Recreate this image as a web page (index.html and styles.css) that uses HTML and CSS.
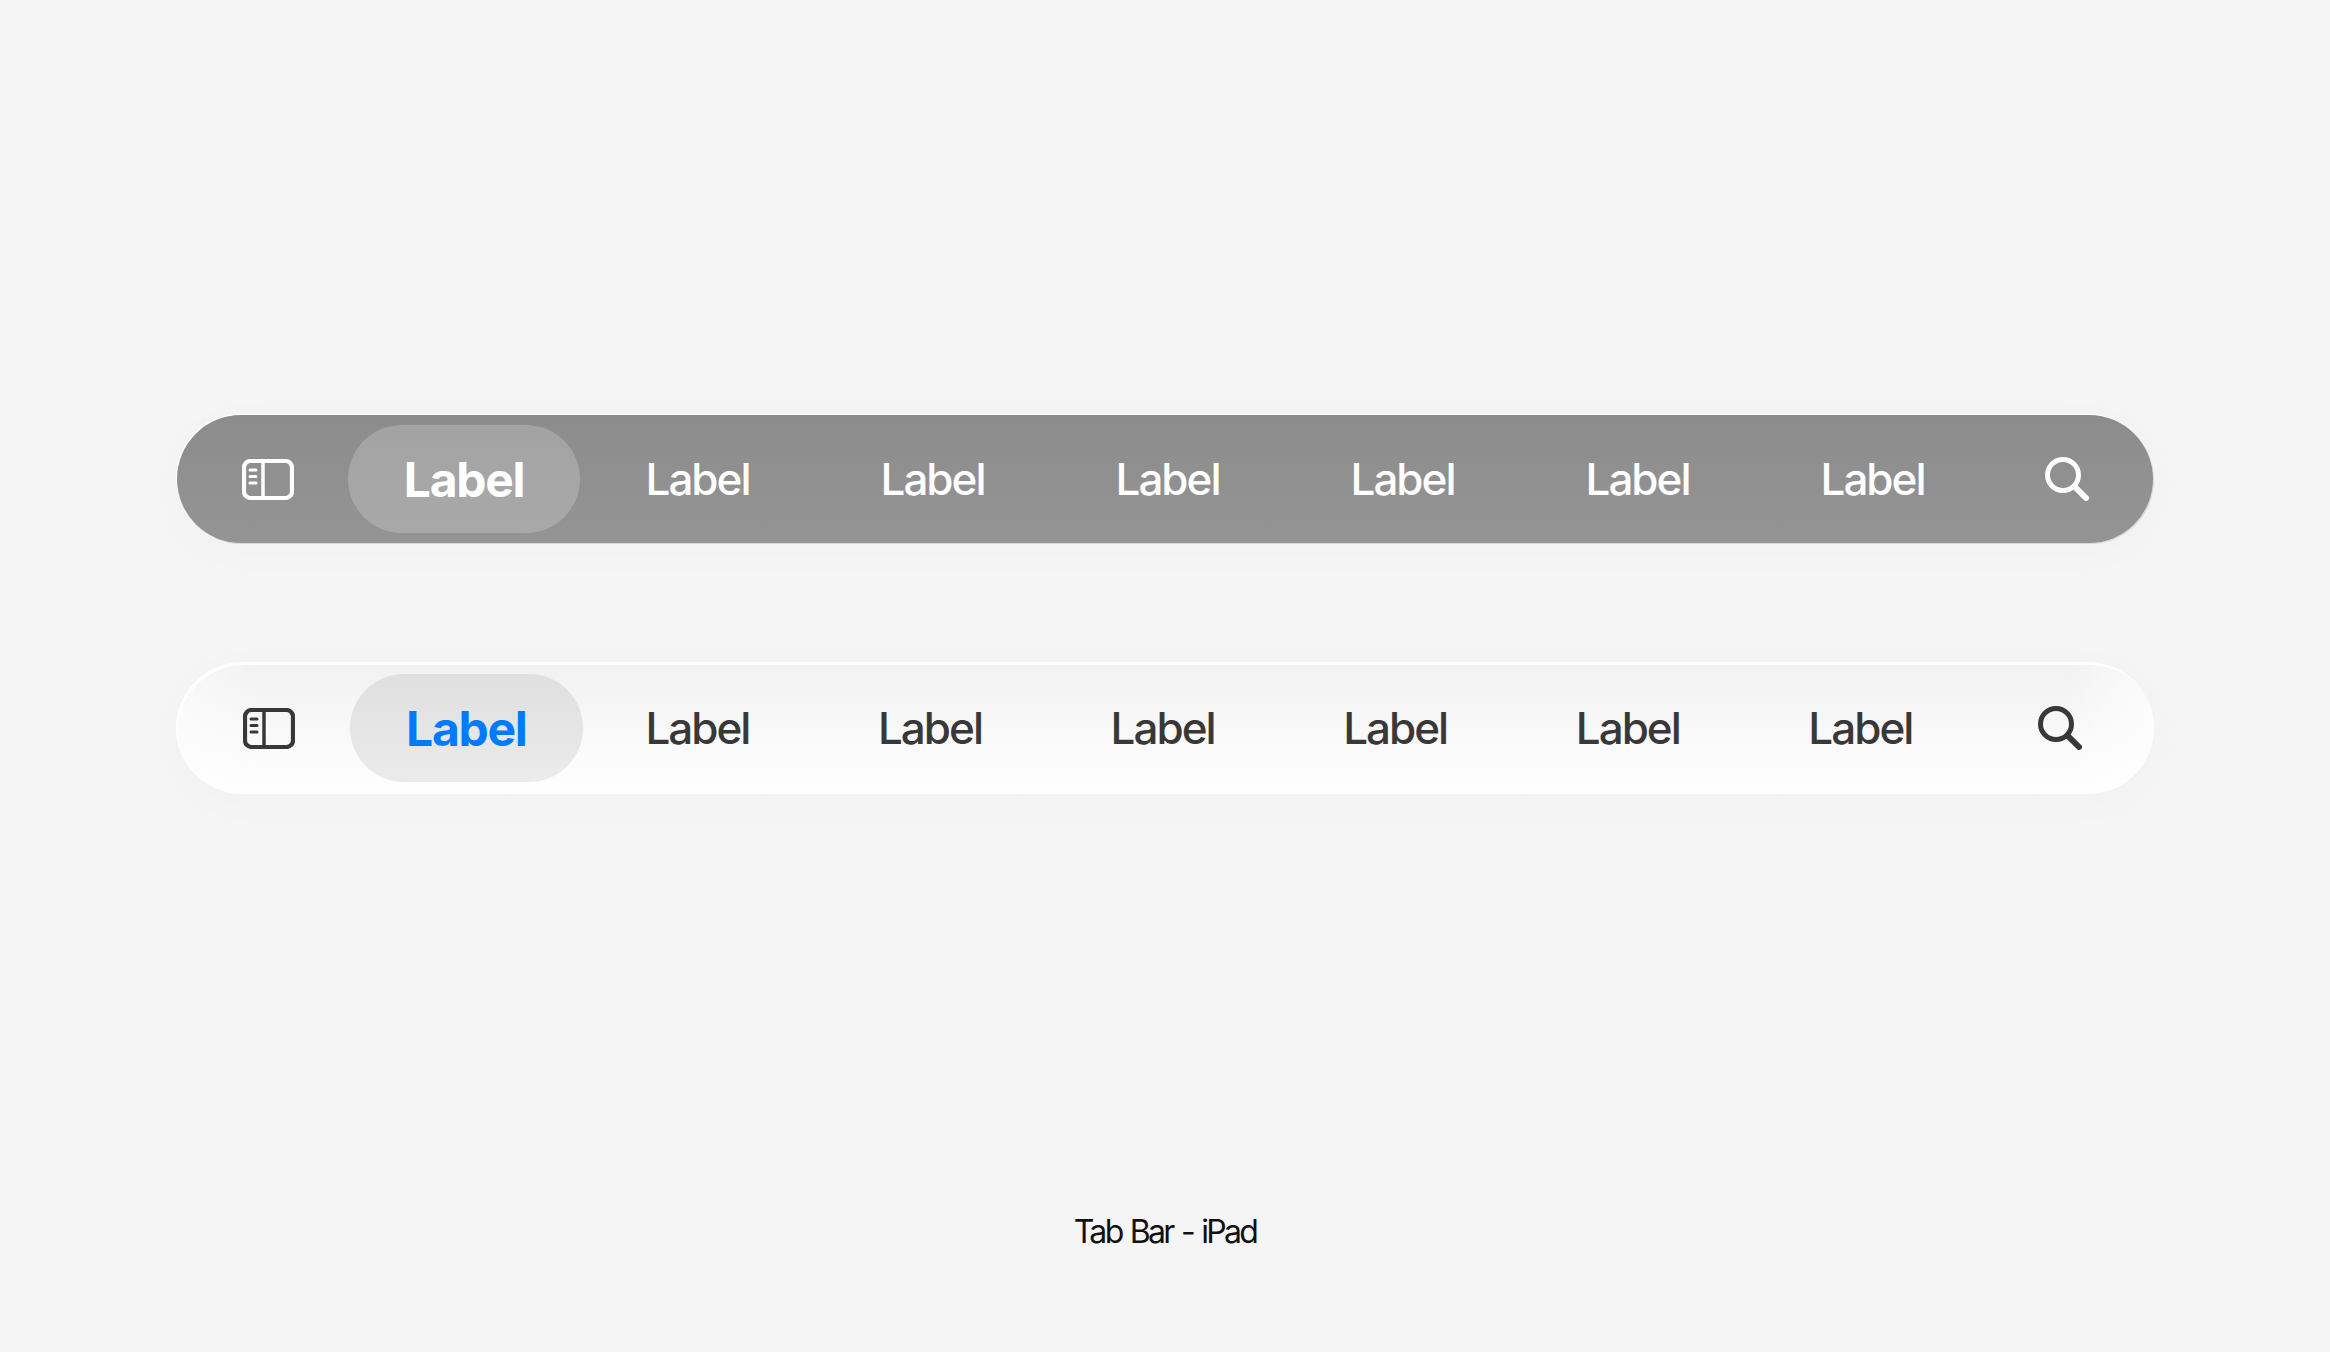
FILE: index.html
```html
<!DOCTYPE html>
<html lang="en">
<head>
  <meta charset="UTF-8" />
  <title>Tab Bar - iPad</title>
  <link rel="stylesheet" href="styles.css">
</head>
<body>

  <!-- Dark tab bar -->
  <div class="tabbar dark">
    <svg class="icon-sidebar" viewBox="0 0 52 41" fill="none" stroke="currentColor">
      <rect x="2" y="2" width="48" height="37" rx="6.500" stroke-width="4.200"/>
      <path d="M21 2V39" stroke-width="3.500"/>
      <path d="M8 11H14M8 17.500H14M8 24H14" stroke-width="3" stroke-linecap="round"/>
    </svg>
    <div class="tabs">
      <div class="tab active">Label</div>
      <div class="tab">Label</div>
      <div class="tab">Label</div>
      <div class="tab">Label</div>
      <div class="tab">Label</div>
      <div class="tab">Label</div>
      <div class="tab">Label</div>
    </div>
    <svg class="icon-search" viewBox="0 0 44 44" fill="none" stroke="currentColor" stroke-width="5" stroke-linecap="round">
      <circle cx="18" cy="18" r="15.500"/>
      <path d="M29.500 29.500L41 41" stroke-width="6"/>
    </svg>
  </div>

  <!-- Light tab bar -->
  <div class="tabbar light">
    <svg class="icon-sidebar" viewBox="0 0 52 41" fill="none" stroke="currentColor">
      <rect x="2" y="2" width="48" height="37" rx="6.500" stroke-width="4.200"/>
      <path d="M21 2V39" stroke-width="3.500"/>
      <path d="M8 11H14M8 17.500H14M8 24H14" stroke-width="3" stroke-linecap="round"/>
    </svg>
    <div class="tabs">
      <div class="tab active">Label</div>
      <div class="tab">Label</div>
      <div class="tab">Label</div>
      <div class="tab">Label</div>
      <div class="tab">Label</div>
      <div class="tab">Label</div>
      <div class="tab">Label</div>
    </div>
    <svg class="icon-search" viewBox="0 0 44 44" fill="none" stroke="currentColor" stroke-width="5" stroke-linecap="round">
      <circle cx="18" cy="18" r="15.500"/>
      <path d="M29.500 29.500L41 41" stroke-width="6"/>
    </svg>
  </div>

  <p class="caption">Tab Bar - iPad</p>

</body>
</html>
```

FILE: styles.css
```css
body {
  margin: 0;
  height: 1352px;
  box-sizing: border-box;
  padding: 415px 177px 0;
  font-family: Inter, 'Liberation Sans', sans-serif;
  background: #f5f5f5;
  overflow: hidden;
}

.tabbar {
  display: flex;
  align-items: center;
  box-sizing: border-box;
  border-radius: 70px;
}

.tabbar.dark {
  height: 128px;
  padding: 0 64px 0 65px;
  color: #fff;
  background: linear-gradient(#8c8c8c, #949494);
  box-shadow: -1px -1px 0 #fff, 1px 1px 0 #d8d8d8, 0 8px 50px rgba(0,0,0,0.02);
}

.tabbar.light {
  height: 132px;
  margin: 119px -1px 0;
  padding: 0 71px 0 67px;
  color: #383838;
  background:
    linear-gradient(to left, rgba(255,255,255,0.7), rgba(255,255,255,0) 90px),
    linear-gradient(to right, rgba(255,255,255,0.5), rgba(255,255,255,0) 90px),
    linear-gradient(#f1f1f1, #ffffff);
  box-shadow: inset 2px 3px 0 #fff, 0 8px 50px rgba(0,0,0,0.02);
}

.icon-sidebar {
  width: 52px;
  height: 41px;
  flex: none;
}

.icon-search {
  width: 44px;
  height: 44px;
  flex: none;
}

.tabs {
  display: flex;
  margin-left: 55px;
}

.dark .tabs {
  gap: 3px;
  margin-left: 54px;
  margin-right: 55px;
}

.light .tabs {
  margin-right: 60px;
}

.tab {
  width: 232px;
  height: 108px;
  box-sizing: border-box;
  padding-right: 3px;
  display: flex;
  align-items: center;
  justify-content: center;
  border-radius: 54px;
  font-size: 44px;
  font-weight: 450;
  letter-spacing: -2px;
}

.light .tab {
  width: 232.6px;
}

.tab.active {
  padding-right: 0;
  font-size: 48px;
  font-weight: 700;
  letter-spacing: -1.3px;
}

.dark .tab.active {
  background: rgba(255,255,255,0.2);
}

.light .tab.active {
  color: #007aff;
  background: rgba(0,0,0,0.075);
}

.caption {
  margin: 418px 0 0;
  text-align: center;
  font-size: 32px;
  line-height: 40px;
  letter-spacing: -2.7px;
  word-spacing: 2px;
  color: #111;
}
```
